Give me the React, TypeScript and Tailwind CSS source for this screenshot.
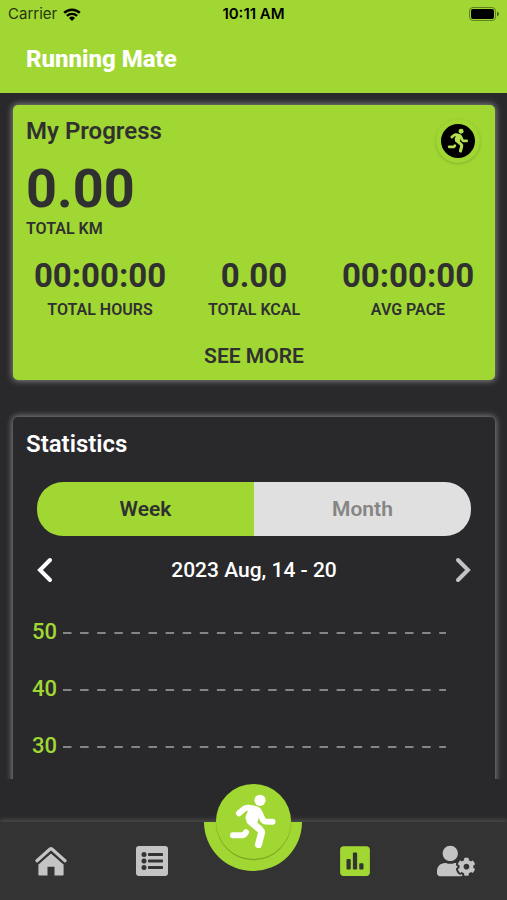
import { useState } from "react";
import { FaPoll, FaUserCog } from "react-icons/fa";

const TOTALS = [
  { label: "TOTAL HOURS", value: "00:00:00" },
  { label: "TOTAL KCAL", value: "0.00" },
  { label: "AVG PACE", value: "00:00:00" },
];

const PERIODS = ["Week", "Month"] as const;
const GRID_VALUES = [50, 40, 30];

const RunnerIcon = ({ className }: { className: string }) => (
  <svg
    viewBox="5 5 54 58"
    className={className}
    fill="none"
    stroke="currentColor"
    strokeLinecap="round"
    strokeLinejoin="round"
  >
    <circle cx="39" cy="12.3" r="5.6" fill="currentColor" stroke="none" />
    <path d="M18 25.3 23 21q2-1.5 4.500-1.200l6 .9q3.500.6 4.800 3.500l3.200 6.800q1 2.500 3.500 2.600l6.500.1" strokeWidth="6" />
    <path d="M31 22 35.500 24 33 34 29 33 28 29.500z" fill="currentColor" strokeWidth="7" />
    <path d="M29.500 33.500 39 41.500q2 1.800 1.300 4.300L37.500 56.500" strokeWidth="7" />
    <path d="M12 47.200h9.500q1.500 0 2.500-1.400l1-1.600" strokeWidth="6" />
  </svg>
);

const HomeIcon = () => (
  <svg viewBox="0 0 32 30" className="w-8 h-[30px]" fill="currentColor">
    <path d="M16 7.400 28.600 18.600V28.400c0 .6-.4 1-1 1H19.500v-8.600h-7v8.600H4.400c-.6 0-1-.4-1-1V18.600z" />
    <path
      d="M2 14.800 15.100 3q.9-.8 1.800 0L30 14.800"
      fill="none"
      stroke="currentColor"
      strokeWidth="3.2"
      strokeLinecap="round"
    />
    <path d="M3 17.500 16 6 29 17.500" fill="none" stroke="#333333" strokeWidth="1.4" />
  </svg>
);

const ListIcon = () => (
  <svg viewBox="0 0 32 30" className="w-8 h-[30px]">
    <rect width="32" height="30" rx="3" fill="currentColor" />
    <g fill="#333333">
      <circle cx="8" cy="8.500" r="2.500" />
      <circle cx="8" cy="15" r="2.500" />
      <circle cx="8" cy="21.500" r="2.500" />
      <rect x="12" y="7" width="15" height="3" rx="0.800" />
      <rect x="12" y="13.500" width="15" height="3" rx="0.800" />
      <rect x="12" y="20" width="15" height="3" rx="0.800" />
    </g>
  </svg>
);

const WifiIcon = () => (
  <svg viewBox="0 0 18 13" className="w-[18px] h-[13px]" fill="none" stroke="currentColor">
    <path d="M1.200 4.800a11.200 11.200 0 0 1 15.600 0" strokeWidth="2.500" />
    <path d="M3.900 7.900a7.300 7.300 0 0 1 10.200 0" strokeWidth="2.300" />
    <path d="M9 13 6 9.900a4.300 4.300 0 0 1 6 0z" fill="currentColor" stroke="none" />
  </svg>
);

const BatteryIcon = () => (
  <svg viewBox="0 0 30 14" className="w-[30px] h-3.5">
    <rect x="0.500" y="0.500" width="26" height="13" rx="3.500" fill="none" stroke="#000" strokeOpacity="0.400" />
    <rect x="2" y="2" width="23" height="10" rx="2" />
    <path d="M28 4.600c1.200.5 2 1.300 2 2.400s-.8 1.900-2 2.400z" fillOpacity="0.500" />
  </svg>
);

const Chevron = ({ points }: { points: string }) => (
  <svg viewBox="0 0 16 26" className="w-4 h-[26px]" fill="none" stroke="currentColor" strokeWidth="4" strokeLinecap="round">
    <polyline points={points} />
  </svg>
);

const App = () => {
  const [period, setPeriod] = useState<(typeof PERIODS)[number]>("Week");

  return (
    <div className="h-screen flex flex-col overflow-hidden bg-[#29292b] text-[#303030] font-['Roboto',sans-serif]">
      <header className="shrink-0 bg-[#a1d733]">
        {/* Status bar */}
        <div className="h-7 px-2 grid grid-cols-3 items-center text-black text-[15px] leading-5 font-['Inter',sans-serif]">
          <div className="flex items-center gap-1.5">
            <span className="text-[#26350a]">Carrier</span>
            <WifiIcon />
          </div>
          <span className="text-center font-semibold">10:11 AM</span>
          <span className="justify-self-end">
            <BatteryIcon />
          </span>
        </div>
        <h1 className="h-[65px] px-[26px] pb-1 flex items-center text-white text-2xl font-extrabold">
          Running Mate
        </h1>
      </header>

      <main className="flex-1 min-h-0 overflow-hidden pl-[13px] pr-3 pt-3">
        {/* Progress */}
        <section className="relative rounded-[5px] bg-[#a1d733] px-[13px] pt-3 pb-2.5 shadow-[0_0_6px_1px_#858585]">
          <h2 className="text-2xl leading-7 font-semibold">My Progress</h2>
          <button
            aria-label="Start run"
            className="absolute top-3.5 right-[15px] size-11 rounded-full bg-[#a1d733] flex items-center justify-center shadow-[0_1px_3px_#84ad2c]"
          >
            <span className="size-[34px] rounded-full bg-black text-[#b5e04f] flex items-center justify-center">
              <RunnerIcon className="w-6 h-[26px]" />
            </span>
          </button>
          <p className="mt-4 text-[54px] leading-[56px] font-bold">0.00</p>
          <p className="text-base leading-6 font-semibold">TOTAL KM</p>

          <dl className="-mx-[3px] mt-[17px] grid grid-cols-3 text-center">
            {TOTALS.map(({ label, value }) => (
              <div key={label} className="flex flex-col-reverse">
                <dt className="mt-1 text-base leading-6 font-semibold">{label}</dt>
                <dd className="text-[33px] leading-9 font-bold">{value}</dd>
              </div>
            ))}
          </dl>

          <button className="block mx-auto mt-5 text-[21px] leading-7 font-semibold">
            SEE MORE
          </button>
        </section>

        {/* Statistics */}
        <section className="mt-[37px] h-[420px] rounded-[5px] bg-[#29292b] px-[13px] pt-[13px] text-white shadow-[0_0_6px_1px_#858585]">
          <h2 className="text-2xl leading-7 font-semibold">Statistics</h2>

          <div className="mt-6 mx-[11px] h-[54px] flex rounded-[26px] overflow-hidden">
            {PERIODS.map((p) => (
              <button
                key={p}
                onClick={() => setPeriod(p)}
                className={`flex-1 text-[21px] leading-7 font-semibold ${
                  period === p
                    ? "bg-[#a1d733] text-[#303030]"
                    : "bg-[#e0e0e0] text-[#858585]"
                }`}
              >
                {p}
              </button>
            ))}
          </div>

          <div className="mt-5 mx-[11px] flex items-center justify-between">
            <button aria-label="Previous week">
              <Chevron points="13,3 3,13 13,23" />
            </button>
            <p className="text-[21px] leading-7 font-medium">2023 Aug, 14 - 20</p>
            <button aria-label="Next week" className="text-[#c4c4c4]">
              <Chevron points="3,3 13,13 3,23" />
            </button>
          </div>

          <div className="mt-[19px] pl-1.5 pr-9">
            {GRID_VALUES.map((value) => (
              <div key={value} className="h-[57px] flex items-center gap-1.5">
                <span className="w-[25px] text-[22px] leading-7 font-medium text-[#a1d733]">
                  {value}
                </span>
                <svg className="flex-1 h-1">
                  <line x1="0" y1="3" x2="100%" y2="3" stroke="#858585" strokeWidth="2" strokeDasharray="8.5 8.6" />
                </svg>
              </div>
            ))}
          </div>
        </section>
      </main>

      {/* Tab bar */}
      <footer className="shrink-0 pt-[43px]">
        <nav className="relative h-[78px] grid grid-cols-5 items-center justify-items-center bg-[#333333] text-[#c4c4c4] shadow-[0_-2px_5px_#505050]">
          <a href="#home" aria-label="Home">
            <HomeIcon />
          </a>
          <a href="#history" aria-label="History">
            <ListIcon />
          </a>
          <a
            href="#run"
            aria-label="Run"
            className="self-start w-[98px] h-[49px] rounded-b-full bg-[#a1d733] flex justify-center text-white"
          >
            <span className="absolute -top-[38px] size-[75px] rounded-full bg-[#a1d733] flex items-center justify-center shadow-[0_1px_1px_#6f9a1c]">
              <RunnerIcon className="w-[54px] h-[58px]" />
            </span>
          </a>
          <a href="#statistics" aria-label="Statistics" className="text-[#a1d733]">
            <FaPoll size={34} />
          </a>
          <a href="#profile" aria-label="Profile">
            <FaUserCog size={38} />
          </a>
        </nav>
      </footer>
    </div>
  );
};

export default App;
